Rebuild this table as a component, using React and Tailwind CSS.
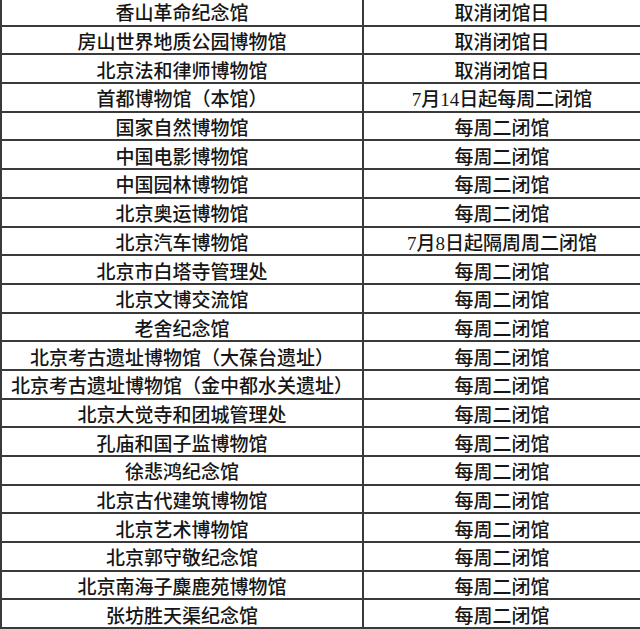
const rows = [
  ["香山革命纪念馆", "取消闭馆日"],
  ["房山世界地质公园博物馆", "取消闭馆日"],
  ["北京法和律师博物馆", "取消闭馆日"],
  ["首都博物馆（本馆）", "7月14日起每周二闭馆"],
  ["国家自然博物馆", "每周二闭馆"],
  ["中国电影博物馆", "每周二闭馆"],
  ["中国园林博物馆", "每周二闭馆"],
  ["北京奥运博物馆", "每周二闭馆"],
  ["北京汽车博物馆", "7月8日起隔周周二闭馆"],
  ["北京市白塔寺管理处", "每周二闭馆"],
  ["北京文博交流馆", "每周二闭馆"],
  ["老舍纪念馆", "每周二闭馆"],
  ["北京考古遗址博物馆（大葆台遗址）", "每周二闭馆"],
  ["北京考古遗址博物馆（金中都水关遗址）", "每周二闭馆"],
  ["北京大觉寺和团城管理处", "每周二闭馆"],
  ["孔庙和国子监博物馆", "每周二闭馆"],
  ["徐悲鸿纪念馆", "每周二闭馆"],
  ["北京古代建筑博物馆", "每周二闭馆"],
  ["北京艺术博物馆", "每周二闭馆"],
  ["北京郭守敬纪念馆", "每周二闭馆"],
  ["北京南海子麋鹿苑博物馆", "每周二闭馆"],
  ["张坊胜天渠纪念馆", "每周二闭馆"],
]

const App = () => {
  return (
    <div className="w-[640px] h-[629px] overflow-hidden bg-white">
      <div
        className="w-[642px] -mt-[2px] border-l-2 border-[#3a3a3a] text-[#161616] text-[19px] font-medium leading-none"
        style={{ fontFamily: '"Liberation Serif", "Noto Sans CJK SC", serif' }}
      >
        {rows.map(([name, note], i) => (
          <div key={i} className="flex h-[28.7px] border-b-2 border-[#3a3a3a]">
            <div className="w-[362px] shrink-0 flex items-center justify-center pt-[5px] whitespace-nowrap border-r-2 border-[#3a3a3a]">
              {name}
            </div>
            <div className="flex-1 flex items-center justify-center pt-[5px] whitespace-nowrap border-r-2 border-[#3a3a3a]">
              {note}
            </div>
          </div>
        ))}
      </div>
    </div>
  )
}

export default App
